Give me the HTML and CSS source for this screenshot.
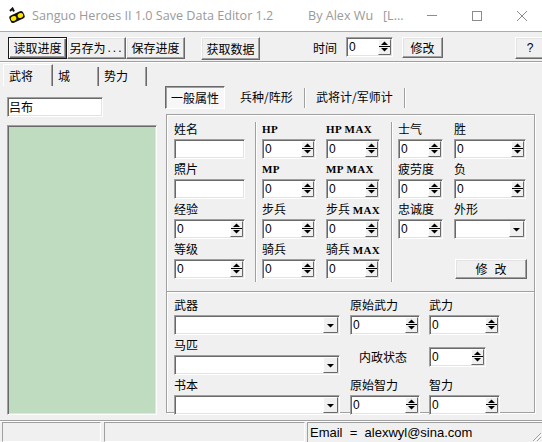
FILE: index.html
```html
<!DOCTYPE html>
<html lang="zh">
<head>
<meta charset="utf-8">
<title>Sanguo Heroes II 1.0 Save Data Editor 1.2</title>
<link rel="stylesheet" href="styles.css">
</head>
<body>
<svg class="defs" width="0" height="0" aria-hidden="true">
  <defs>
    <symbol id="spin" viewBox="0 0 13 16">
      <rect x="0" y="0" width="13" height="16" fill="#f0f0f0"/>
      <path d="M0.5 15.5 V0.5 H12.5" stroke="#ffffff" fill="none"/>
      <path d="M0.5 15.5 H12.5 V0.5" stroke="#696969" fill="none"/>
      <line x1="1" y1="7.5" x2="12" y2="7.5" stroke="#000"/>
      <path d="M3 6 H10 L6.5 2.5 Z" fill="#000"/>
      <path d="M3 9 H10 L6.5 12.5 Z" fill="#000"/>
    </symbol>
    <symbol id="drop" viewBox="0 0 15 16">
      <rect x="0" y="0" width="15" height="16" fill="#f0f0f0"/>
      <path d="M0.5 15.5 V0.5 H14.5" stroke="#ffffff" fill="none"/>
      <path d="M0.5 15.5 H14.5 V0.5" stroke="#696969" fill="none"/>
      <path d="M4 7 H11 L7.5 10.5 Z" fill="#000"/>
    </symbol>
  </defs>
</svg>
<div class="window">
  <header class="titlebar">
    <svg class="app-icon" width="16" height="16" viewBox="0 0 16 16">
      <path d="M1 4 L3.5 1.5 L5 4.5" fill="none" stroke="#111" stroke-width="2"/>
      <g transform="rotate(-24 8 10)">
        <rect x="0.5" y="6" width="15" height="8" rx="2.5" fill="#111"/>
        <ellipse cx="4.3" cy="10" rx="2.8" ry="2.4" fill="#ffe800"/>
        <ellipse cx="11.7" cy="10" rx="2.8" ry="2.4" fill="#ffe800"/>
      </g>
    </svg>
    <span class="title-main">Sanguo Heroes II 1.0 Save Data Editor 1.2</span>
    <span class="title-by">By Alex Wu&nbsp;&nbsp;&nbsp;[L...</span>
    <div class="win-ctrls">
      <span class="wc"><svg width="10" height="10"><line x1="0" y1="4.5" x2="10" y2="4.5" stroke="#8c8c8c"/></svg></span>
      <span class="wc"><svg width="10" height="10"><rect x="0.5" y="0.5" width="9" height="9" fill="none" stroke="#8c8c8c"/></svg></span>
      <span class="wc"><svg width="10" height="10"><path d="M0 0 L10 10 M10 0 L0 10" stroke="#8c8c8c"/></svg></span>
    </div>
  </header>

  <div class="toolbar">
    <button class="btn btn-default w59">读取进度</button>
    <button class="btn w59">另存为<span class="dots">...</span></button>
    <button class="btn w59">保存进度</button>
    <button class="btn w59 fetch">获取数据</button>
    <span class="tb-label">时间</span>
    <div class="field spin tspin"><span class="val">0</span><svg class="sb"><use href="#spin"/></svg></div>
    <button class="btn modbtn">修改</button>
    <button class="btn helpbtn">?</button>
  </div>

  <div class="tabs">
    <div class="tab active">武将</div>
    <div class="tab t-city">城</div>
    <div class="tab t-force">势力</div>
  </div>

  <div class="content">
    <aside class="left">
      <div class="field name-edit">吕布</div>
      <div class="list"></div>
    </aside>
    <section class="right">
      <div class="subtabs">
        <div class="subtab active">一般属性</div>
        <div class="subtab st2">兵种/阵形</div>
        <div class="subsep"></div>
        <div class="subtab st3">武将计/军师计</div>
        <div class="subsep"></div>
      </div>

      <div class="group g1">
        <div class="col colA">
          <div class="cell"><div class="lbl">姓名</div><div class="field w71"></div></div>
          <div class="cell"><div class="lbl">照片</div><div class="field w71"></div></div>
          <div class="cell"><div class="lbl">经验</div><div class="field spin w71"><span class="val">0</span><svg class="sb"><use href="#spin"/></svg></div></div>
          <div class="cell"><div class="lbl">等级</div><div class="field spin w71"><span class="val">0</span><svg class="sb"><use href="#spin"/></svg></div></div>
        </div>
        <div class="vsep"></div>
        <div class="col colB">
          <div class="cell"><div class="lbl en">HP</div><div class="field spin w54"><span class="val">0</span><svg class="sb"><use href="#spin"/></svg></div></div>
          <div class="cell"><div class="lbl en">MP</div><div class="field spin w54"><span class="val">0</span><svg class="sb"><use href="#spin"/></svg></div></div>
          <div class="cell"><div class="lbl">步兵</div><div class="field spin w54"><span class="val">0</span><svg class="sb"><use href="#spin"/></svg></div></div>
          <div class="cell"><div class="lbl">骑兵</div><div class="field spin w54"><span class="val">0</span><svg class="sb"><use href="#spin"/></svg></div></div>
        </div>
        <div class="col colC">
          <div class="cell"><div class="lbl en">HP MAX</div><div class="field spin w54"><span class="val">0</span><svg class="sb"><use href="#spin"/></svg></div></div>
          <div class="cell"><div class="lbl en">MP MAX</div><div class="field spin w54"><span class="val">0</span><svg class="sb"><use href="#spin"/></svg></div></div>
          <div class="cell"><div class="lbl">步兵 <span class="en">MAX</span></div><div class="field spin w54"><span class="val">0</span><svg class="sb"><use href="#spin"/></svg></div></div>
          <div class="cell"><div class="lbl">骑兵 <span class="en">MAX</span></div><div class="field spin w54"><span class="val">0</span><svg class="sb"><use href="#spin"/></svg></div></div>
        </div>
        <div class="vsep vsep2"></div>
        <div class="col colD">
          <div class="cell"><div class="lbl">士气</div><div class="field spin w45"><span class="val">0</span><svg class="sb"><use href="#spin"/></svg></div></div>
          <div class="cell"><div class="lbl">疲劳度</div><div class="field spin w45"><span class="val">0</span><svg class="sb"><use href="#spin"/></svg></div></div>
          <div class="cell"><div class="lbl">忠诚度</div><div class="field spin w45"><span class="val">0</span><svg class="sb"><use href="#spin"/></svg></div></div>
        </div>
        <div class="col colE">
          <div class="cell"><div class="lbl">胜</div><div class="field spin w72"><span class="val">0</span><svg class="sb"><use href="#spin"/></svg></div></div>
          <div class="cell"><div class="lbl">负</div><div class="field spin w72"><span class="val">0</span><svg class="sb"><use href="#spin"/></svg></div></div>
          <div class="cell"><div class="lbl">外形</div><div class="field combo w72"><svg class="db"><use href="#drop"/></svg></div></div>
          <div class="cell"><div class="lbl"></div><button class="btn apply"><span>修</span><span>改</span></button></div>
        </div>
      </div>

      <div class="group g2">
        <div class="cell"><div class="lbl">武器</div><div class="field combo w166"><svg class="db"><use href="#drop"/></svg></div></div>
        <div class="cell"><div class="lbl">原始武力</div><div class="field spin w70"><span class="val">0</span><svg class="sb"><use href="#spin"/></svg></div></div>
        <div class="cell"><div class="lbl">武力</div><div class="field spin w71"><span class="val">0</span><svg class="sb"><use href="#spin"/></svg></div></div>

        <div class="cell"><div class="lbl">马匹</div><div class="field combo w166"><svg class="db"><use href="#drop"/></svg></div></div>
        <div class="cell mid"><div class="lbl neizheng">内政状态</div></div>
        <div class="cell mid"><div class="field spin w57"><span class="val">0</span><svg class="sb"><use href="#spin"/></svg></div></div>

        <div class="cell"><div class="lbl">书本</div><div class="field combo w166"><svg class="db"><use href="#drop"/></svg></div></div>
        <div class="cell"><div class="lbl">原始智力</div><div class="field spin w70"><span class="val">0</span><svg class="sb"><use href="#spin"/></svg></div></div>
        <div class="cell"><div class="lbl">智力</div><div class="field spin w71"><span class="val">0</span><svg class="sb"><use href="#spin"/></svg></div></div>
      </div>
    </section>
  </div>

  <footer class="statusbar">
    <div class="panel p1"></div>
    <div class="panel p2"></div>
    <div class="panel p3">
      <span class="email">Email  =  alexwyl@sina.com</span>
      <svg class="grip" width="12" height="12" viewBox="0 0 12 12">
        <path d="M11 3 L3 11 M11 7 L7 11" stroke="#a0a0a0" fill="none"/>
        <path d="M12 4 L4 12 M12 8 L8 12" stroke="#fff" fill="none"/>
      </svg>
    </div>
  </footer>
</div>
</body>
</html>
```
FILE: styles.css
```css
* { box-sizing: border-box; }
html, body { margin: 0; padding: 0; }
body {
  width: 542px; height: 442px; overflow: hidden;
  background: #f0f0f0;
  font-family: "Noto Sans CJK SC", "Liberation Sans", sans-serif;
  font-size: 12px; color: #000;
}
.defs { display: block; width: 0; height: 0; overflow: hidden; }
.window { width: 542px; height: 442px; display: flex; flex-direction: column; overflow: hidden; }

/* title bar */
.titlebar {
  flex: none; height: 32px; background: #fff;
  border-bottom: 1px solid #acacac;
  display: flex; align-items: center;
}
.app-icon { flex: none; margin-left: 9px; margin-top: -1px; }
.title-main, .title-by {
  font-family: "Open Sans", "Liberation Sans", sans-serif;
  font-size: 12.6px; color: #9a9a9a; white-space: nowrap;
}
.title-main { flex: none; width: 276px; margin-left: 7px; }
.win-ctrls { margin-left: auto; margin-right: -2px; display: flex; }
.wc { width: 45px; height: 31px; display: flex; align-items: center; justify-content: center; }

/* buttons */
.btn {
  font-family: "Noto Sans CJK SC", "Liberation Sans", sans-serif;
  font-size: 12px; color: #000; line-height: 16px;
  background: #f0f0f0; padding: 0; margin: 0;
  height: 22px;
  border: 1px solid; border-color: #fff #696969 #696969 #fff;
  box-shadow: inset -1px -1px 0 #a0a0a0, inset 1px 1px 0 #e3e3e3;
  display: flex; align-items: center; justify-content: center;
  flex: none;
}
.btn-default {
  border: 1px solid #1a1a1a;
  box-shadow: inset 1px 1px 0 #fff, inset -1px -1px 0 #696969, inset -2px -2px 0 #a0a0a0;
}
.w59 { width: 59px; }
.dots { font-family: "Liberation Sans", sans-serif; letter-spacing: 2px; margin-left: 2px; }

/* toolbar */
.toolbar {
  flex: none; height: 30px;
  display: flex; align-items: flex-start;
  padding: 5px 0 0 8px;
  border-bottom: 1px solid #a0a0a0;
  box-shadow: 0 1px 0 #fff;
}
.fetch { margin-left: 16px; height: 23px; }
.tb-label { margin-left: 53px; width: 24px; line-height: 22px; flex: none; }
.tspin { margin-left: 9px; width: 47px; }
.modbtn { margin-left: 9px; width: 41px; height: 21px; }
.helpbtn { margin-left: 72px; width: 30px; font-family: "Liberation Sans", sans-serif; }

/* main tabs */
.tabs {
  flex: none; height: 23px; margin-top: 1px;
  display: flex; align-items: flex-end; padding-left: 3px;
}
.tab {
  flex: none; height: 19px; line-height: 18px; padding-left: 5px;
  border-right: 1px solid #696969;
  box-shadow: inset -1px 0 0 #a0a0a0;
}
.tab.active {
  width: 50px; height: 22px; line-height: 21px;
  border-top: 1px solid #fff; border-left: 1px solid #fff;
}
.t-city { width: 46px; }
.t-force { width: 48px; }

/* content */
.content { flex: none; height: 329px; display: flex; overflow: hidden; }
.left { flex: none; width: 165px; padding-left: 7px; display: flex; flex-direction: column; }

.field {
  flex: none; height: 20px; background: #fff;
  border: 1px solid; border-color: #a0a0a0 #fff #fff #a0a0a0;
  box-shadow: inset 1px 1px 0 #696969, inset -1px -1px 0 #e3e3e3;
  display: flex; align-items: center;
  padding: 0 1px 0 2px;
  font-family: "Liberation Sans", "Noto Sans CJK SC", sans-serif;
  font-size: 12px; line-height: 16px;
}
.name-edit { margin-top: 11px; width: 96px; padding-left: 1px; font-family: "Noto Sans CJK SC", sans-serif; }
.list {
  flex: none; margin-top: 8px; width: 150px; height: 290px;
  background: #c0dcc0;
  border: 1px solid; border-color: #a0a0a0 #fff #fff #a0a0a0;
  box-shadow: inset 1px 1px 0 #696969, inset -1px -1px 0 #e3e3e3;
}

.val { flex: none; }
.sb { width: 13px; height: 16px; margin-left: auto; flex: none; display: block; }
.db { width: 15px; height: 16px; margin-left: auto; flex: none; display: block; }

.right { flex: 1; display: flex; flex-direction: column; }
.subtabs { flex: none; height: 23px; display: flex; }
.subtab { flex: none; line-height: 22px; }
.subtab.active {
  width: 60px; text-align: center;
  background: #f7f7f7;
  border: 1px solid; border-color: #696969 #fff #fff #696969;
  box-shadow: inset 1px 1px 0 #a0a0a0;
  line-height: 21px;
}
.st2 { width: 64px; margin-left: 15px; }
.st3 { width: 98px; padding-left: 10px; }
.subsep {
  flex: none; width: 2px; height: 20px; margin-top: 2px;
  border-left: 1px solid #a0a0a0; border-right: 1px solid #fff;
}

/* group boxes */
.group {
  flex: none; margin-left: 1px; width: 369px;
  border: 1px solid #a0a0a0;
  box-shadow: inset 1px 1px 0 #fff, 1px 1px 0 #fff;
}
.g1 {
  margin-top: 5px; height: 177px; border-bottom: none;
  display: flex; align-items: flex-start;
  padding: 4px 0 0 7px;
}
.g2 {
  height: 122px;
  display: grid;
  grid-template-columns: 176px 79px 80px;
  grid-template-rows: 40px 40px 40px;
  padding: 3px 0 0 7px;
}
.col { flex: none; display: flex; flex-direction: column; }
.cell { display: flex; flex-direction: column; height: 40px; }
.lbl { height: 20px; line-height: 20px; white-space: nowrap; }
.en { font-family: "Liberation Serif", serif; font-weight: bold; font-size: 11px; letter-spacing: 0.4px; }

.colA { width: 71px; }
.colB { width: 54px; margin-left: 5px; }
.colC { width: 54px; margin-left: 10px; }
.colD { width: 45px; margin-left: 5px; }
.colE { width: 72px; margin-left: 11px; }
.vsep {
  flex: none; width: 2px; height: 160px; margin: 3px 0 0 10px;
  border-left: 1px solid #a0a0a0; border-right: 1px solid #fff;
}
.vsep2 { margin-left: 11px; }

.w71 { width: 71px; }
.w72 { width: 72px; }
.w54 { width: 54px; }
.w45 { width: 45px; }
.w70 { width: 70px; }
.w57 { width: 57px; }
.w166 { width: 166px; }
.combo { padding-right: 1px; }

.apply { width: 72px; height: 20px; gap: 7px; margin-left: 1px; }

.cell.mid { justify-content: center; padding-top: 3px; }
.neizheng { padding-left: 9px; }

/* status bar */
.statusbar {
  flex: none; margin-top: 5px; height: 22px;
  border-top: 1px solid #a0a0a0;
  box-shadow: inset 0 1px 0 #fff;
  display: flex; padding: 1px 0 0 2px;
}
.panel {
  flex: none; height: 20px;
  border: 1px solid; border-color: #a0a0a0 #fff #fff #a0a0a0;
}
.p1 { width: 99px; }
.p2 { width: 201px; margin-left: 3px; }
.p3 { flex: 1; margin-left: 2px; display: flex; align-items: center; padding-left: 2px; border-right: none; border-bottom: none; }
.email {
  font-family: "Liberation Sans", sans-serif; font-size: 13px;
  white-space: pre; line-height: 18px;
}
.grip { margin-left: auto; align-self: flex-end; flex: none; }
```
